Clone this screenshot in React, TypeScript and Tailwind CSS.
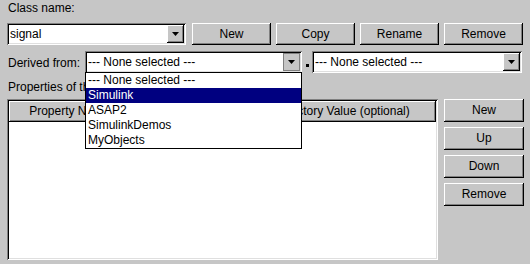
import React from "react";

const sunken =
  "shadow-[inset_1px_1px_0_#808080,inset_-1px_-1px_0_#ffffff,inset_2px_2px_0_#000000,inset_-2px_-2px_0_#dfdfdf]";
const raised =
  "shadow-[inset_-1px_-1px_0_#000000,inset_1px_1px_0_#ffffff,inset_-2px_-2px_0_#808080]";

function Arrow({ pressed }: { pressed?: boolean }) {
  return (
    <div
      className={`my-[2px] mr-[2px] flex w-[17px] items-center justify-center bg-[#c6c6c6] ${
        pressed ? "border border-[#808080]" : raised
      }`}
    >
      <svg width="7" height="4" viewBox="0 0 7 4">
        <path d="M0 0H7L3.5 4Z" fill="#000" />
      </svg>
    </div>
  );
}

function Btn({ label, className }: { label: string; className: string }) {
  return (
    <div
      className={`flex items-center justify-center bg-[#c6c6c6] text-[12px] text-black ${raised} ${className}`}
    >
      {label}
    </div>
  );
}

function Cursor() {
  return (
    <svg
      width="13"
      height="20"
      viewBox="0 0 13 20"
      className="absolute left-[288px] top-[89px]"
    >
      <path
        d="M0.5 0.5V16.5L4.5 12.5L7.5 19L9.5 18L6.7 11.5H11.5Z"
        fill="#fff"
        stroke="#000"
        strokeWidth="1"
        strokeLinejoin="miter"
      />
    </svg>
  );
}

export default function App() {
  return (
    <div
      className="relative h-[264px] w-[530px] overflow-hidden bg-[#c6c6c6] pl-[7px] text-[12px] leading-[15px] text-black"
      style={{ fontFamily: '"Liberation Sans", Arial, sans-serif' }}
    >
      {/* Class name label */}
      <div className="pl-[1px] pt-[1px] h-[16px]">Class name:</div>

      {/* Row: class combo + buttons */}
      <div className="mt-[7px] flex h-[22px]">
        <div className={`flex w-[179px] bg-white ${sunken}`}>
          <div className="flex flex-1 items-center pl-[3px]">signal</div>
          <Arrow />
        </div>
        <div className="ml-[6px] flex gap-[5px]">
          <Btn label="New" className="w-[79px]" />
          <Btn label="Copy" className="w-[79px]" />
          <Btn label="Rename" className="w-[79px]" />
          <Btn label="Remove" className="w-[79px]" />
        </div>
      </div>

      {/* Row: derived from */}
      <div className="mt-[6px] flex h-[22px] items-stretch">
        <div className="flex w-[78px] items-center pl-[1px] pt-[3px]">Derived from:</div>
        <div className="relative flex w-[217px]">
          <div className={`flex flex-1 bg-white ${sunken}`}>
            <div className="flex flex-1 items-center pl-[3px]">--- None selected ---</div>
            <Arrow pressed />
          </div>
          {/* dropdown list */}
          <div className="absolute left-0 top-[21px] z-10 w-[217px] border border-black bg-white">
            <div className="h-[15px] pl-[2px]">--- None selected ---</div>
            <div className="h-[15px] bg-[#000080] pl-[2px] text-white">Simulink</div>
            <div className="h-[15px] pl-[2px]">ASAP2</div>
            <div className="h-[15px] pl-[2px]">SimulinkDemos</div>
            <div className="h-[15px] pl-[2px]">MyObjects</div>
          </div>
        </div>
        <div className="flex w-[10px] items-center justify-center pt-[7px]">
          <div className="h-[3px] w-[3px] bg-black" />
        </div>
        <div className={`flex w-[210px] bg-white ${sunken}`}>
          <div className="flex flex-1 items-center pl-[3px]">--- None selected ---</div>
          <Arrow />
        </div>
      </div>

      {/* Properties label */}
      <div className="mt-[7px] h-[16px] pl-[1px]">Properties of this class:</div>

      {/* Table + side buttons */}
      <div className="mt-[3px] flex">
        <div className={`flex h-[161px] w-[431px] flex-col bg-white p-[2px] ${sunken}`}>
          <div className="flex h-[21px]">
            <div className={`flex w-[121px] items-center justify-center bg-[#c6c6c6] ${raised}`}>
              Property Name
            </div>
            <div className={`flex w-[127px] items-center justify-center bg-[#c6c6c6] ${raised}`}>
              Property Type
            </div>
            <div className={`flex flex-1 items-center justify-center bg-[#c6c6c6] ${raised}`}>
              Factory Value (optional)
            </div>
          </div>
          <div className="flex-1 bg-white" />
        </div>
        <div className="ml-[6px] flex flex-col gap-[5px]">
          <Btn label="New" className="h-[23px] w-[80px]" />
          <Btn label="Up" className="h-[23px] w-[80px]" />
          <Btn label="Down" className="h-[23px] w-[80px]" />
          <Btn label="Remove" className="h-[23px] w-[80px]" />
        </div>
      </div>

      <Cursor />
    </div>
  );
}
